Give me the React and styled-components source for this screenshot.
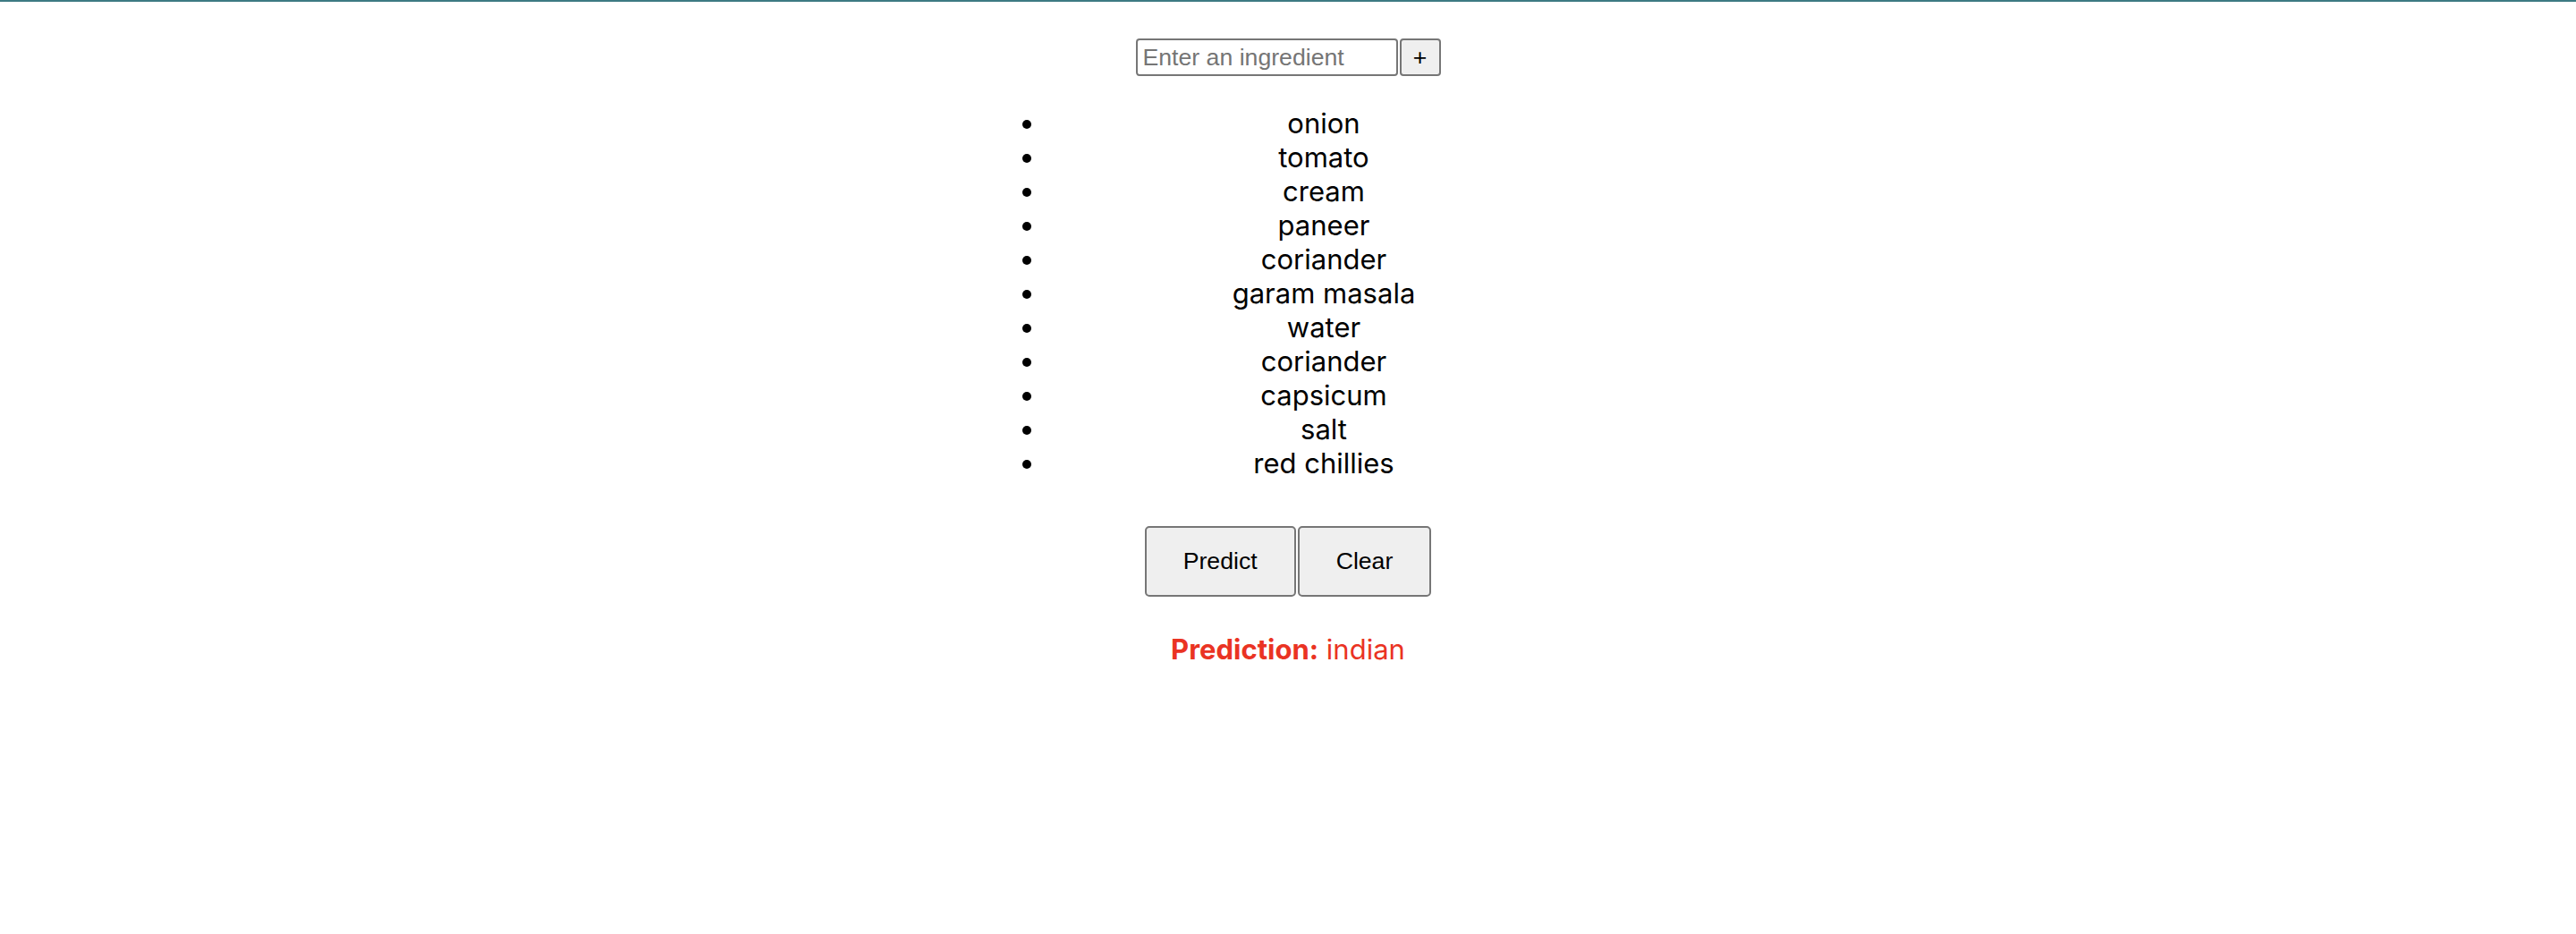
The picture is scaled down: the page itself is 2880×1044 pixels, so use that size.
import React from 'react';
import styled, { createGlobalStyle } from 'styled-components';

const GlobalStyle = createGlobalStyle`
  html, body {
    margin: 0;
    padding: 0;
    background: #ffffff;
  }
`;

const Page = styled.div`
  box-sizing: border-box;
  min-height: 1044px;
  border-top: 2px solid #3d7a83;
  padding: 0 16px;
  text-align: center;
  color: #000;
`;

const InputRow = styled.div`
  display: flex;
  justify-content: center;
  gap: 2px;
  margin-top: 41px;
`;

const IngredientInput = styled.input`
  box-sizing: border-box;
  width: 293px;
  height: 42px;
  padding: 0 6px;
  border: 2px solid #767676;
  border-radius: 4px;
  font-family: "Liberation Sans", Arial, sans-serif;
  font-size: 26.67px;
  color: #000;
  outline: none;

  &::placeholder {
    color: #757575;
  }
`;

const Button = styled.button`
  box-sizing: border-box;
  background-color: #efefef;
  border: 2px solid #767676;
  border-radius: ${(p) => (p.small ? '4px' : '5px')};
  color: #000;
  font-family: "Liberation Sans", Arial, sans-serif;
  font-size: 26.67px;
  line-height: normal;
  padding: ${(p) => (p.small ? '0' : '22px 41px')};
  width: ${(p) => (p.small ? '46px' : 'auto')};
  height: ${(p) => (p.small ? '42px' : 'auto')};
  cursor: pointer;
`;

const IngredientList = styled.ul`
  box-sizing: border-box;
  width: 700px;
  margin: 34px auto 0;
  padding-left: 80px;
  list-style: disc outside;
  font-family: Inter, "Noto Sans", sans-serif;
  font-size: 31px;
  line-height: 38px;
  text-align: center;
`;

const Item = styled.li``;

const ButtonsRow = styled.div`
  display: flex;
  justify-content: center;
  gap: 2px;
  margin-top: 51px;
`;

const Prediction = styled.p`
  margin: 40px 0 0;
  font-family: Inter, "Noto Sans", sans-serif;
  font-size: 31px;
  line-height: 38px;
  color: #ea3323;

  strong {
    font-weight: 700;
  }
`;

const ingredients = [
  'onion',
  'tomato',
  'cream',
  'paneer',
  'coriander',
  'garam masala',
  'water',
  'coriander',
  'capsicum',
  'salt',
  'red chillies',
];

const App = () => {
  return (
    <>
      <GlobalStyle />
      <Page>
        <InputRow>
          <IngredientInput type="text" placeholder="Enter an ingredient" />
          <Button small>+</Button>
        </InputRow>
        <IngredientList>
          {ingredients.map((name, i) => (
            <Item key={i}>{name}</Item>
          ))}
        </IngredientList>
        <ButtonsRow>
          <Button>Predict</Button>
          <Button>Clear</Button>
        </ButtonsRow>
        <Prediction>
          <strong>Prediction:</strong> indian
        </Prediction>
      </Page>
    </>
  );
};

export default App;
